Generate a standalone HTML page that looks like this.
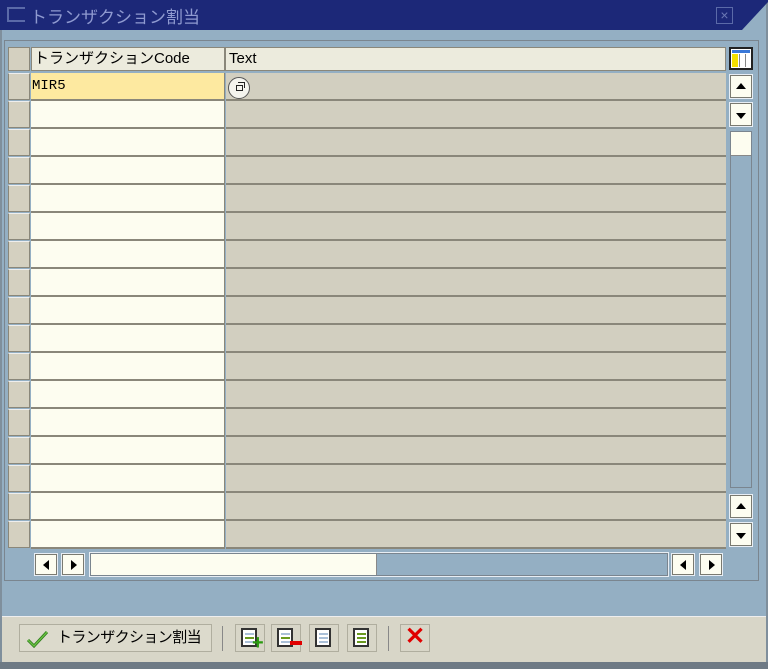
<!DOCTYPE html>
<html><head><meta charset="utf-8"><style>
*{margin:0;padding:0;box-sizing:border-box}
body{width:768px;height:669px;background:#fff;position:relative;overflow:hidden;font-family:"Liberation Sans","Noto Sans CJK JP",sans-serif;font-size:15px}
.a{position:absolute;white-space:nowrap}
.btn{position:absolute;background:#fdfdf0;border:1px solid #7a7a70;box-shadow:0 0 0 1px #e8eef4}
.tri{position:absolute;width:0;height:0}
</style></head><body>
<div class="a" style="left:0;top:0;width:768px;height:669px;background:#94afc3;border:2px solid #7f8f9c"></div>
<div class="a" style="left:0;top:0;width:768px;height:30px;background:#1c2878;clip-path:polygon(0 0,768px 0,768px 2px,742px 30px,0 30px)"></div>
<div class="a" style="left:7px;top:7px;width:18px;height:15px;border:2px solid #5b6aa8;border-right:none"></div>
<div class="a" style="left:30px;top:3px;color:#8f9ad0;font-size:17px">トランザクション割当</div>
<div class="a" style="left:716px;top:7px;width:17px;height:17px;border:1px solid #5b6aa8;color:#6b78b4;font-size:14px;line-height:15px;text-align:center">×</div>
<div class="a" style="left:4px;top:40px;width:755px;height:541px;border:1px solid #7a858f;background:#94afc3"></div>
<div class="a" style="left:8px;top:47px;width:22px;height:24px;background:#d4d0c0;border:1px solid #8a877a"></div>
<div class="a" style="left:31px;top:47px;width:194px;height:24px;background:#ecebdd;border:1px solid #8a877a;padding-left:2px;line-height:22px">トランザクションCode</div>
<div class="a" style="left:225px;top:47px;width:501px;height:24px;background:#ecebdd;border:1px solid #8a877a;padding-left:3px;line-height:22px">Text</div>
<div class="a" style="left:729px;top:47px;width:24px;height:23px;background:#fff;border:2px solid #222">
 <div class="a" style="left:1px;top:1px;width:18px;height:3px;background:#3a78d8"></div>
 <div class="a" style="left:1px;top:5px;width:6px;height:13px;background:#f4e000"></div>
 <div class="a" style="left:8px;top:5px;width:1px;height:13px;background:#888"></div>
 <div class="a" style="left:14px;top:5px;width:1px;height:13px;background:#888"></div>
</div>
<div id="rows"></div>
<div class="btn" style="left:730px;top:75px;width:22px;height:23px"><div class="tri" style="left:5px;top:7px;border:5px solid transparent;border-bottom:6px solid #000;border-top:none"></div></div>
<div class="btn" style="left:730px;top:103px;width:22px;height:23px"><div class="tri" style="left:5px;top:9px;border:5px solid transparent;border-top:6px solid #000;border-bottom:none"></div></div>
<div class="a" style="left:730px;top:131px;width:22px;height:357px;background:#94afc3;border:1px solid #7a858f"></div>
<div class="a" style="left:731px;top:132px;width:20px;height:24px;background:#fdfdf0;border-bottom:1px solid #888"></div>
<div class="btn" style="left:730px;top:495px;width:22px;height:23px"><div class="tri" style="left:5px;top:7px;border:5px solid transparent;border-bottom:6px solid #000;border-top:none"></div></div>
<div class="btn" style="left:730px;top:523px;width:22px;height:23px"><div class="tri" style="left:5px;top:9px;border:5px solid transparent;border-top:6px solid #000;border-bottom:none"></div></div>
<div class="btn" style="left:35px;top:554px;width:22px;height:21px"><div class="tri" style="left:7px;top:5px;border:5px solid transparent;border-right:6px solid #000;border-left:none"></div></div>
<div class="btn" style="left:62px;top:554px;width:22px;height:21px"><div class="tri" style="left:8px;top:5px;border:5px solid transparent;border-left:6px solid #000;border-right:none"></div></div>
<div class="a" style="left:90px;top:553px;width:578px;height:23px;background:#94afc3;border:1px solid #7a858f;box-shadow:0 0 0 1px #e8eef4"></div>
<div class="a" style="left:91px;top:554px;width:286px;height:21px;background:#fdfdf0;border-right:1px solid #888"></div>
<div class="btn" style="left:672px;top:554px;width:22px;height:21px"><div class="tri" style="left:7px;top:5px;border:5px solid transparent;border-right:6px solid #000;border-left:none"></div></div>
<div class="btn" style="left:700px;top:554px;width:22px;height:21px"><div class="tri" style="left:8px;top:5px;border:5px solid transparent;border-left:6px solid #000;border-right:none"></div></div>
<div class="a" style="left:2px;top:616px;width:764px;height:46px;background:#d8d6c8;border-top:1px solid #eee"></div>
<div class="a" style="left:0;top:662px;width:768px;height:7px;background:#6e7a85"></div>
<div class="a" style="left:19px;top:624px;width:193px;height:28px;border:1px solid #b0ae9f;background:#dcdacc;font-size:15px;line-height:26px;padding-left:37px;letter-spacing:-0.6px;overflow:hidden">トランザクション割当</div>
<svg class="a" style="left:26px;top:629px" width="24" height="20"><path d="M2 11 L8 17 L21 3" stroke="#2a7a1a" stroke-width="3" fill="none"/><path d="M2 11 L8 17 L21 3" stroke="#6ac040" stroke-width="1.4" fill="none"/></svg>
<div class="a" style="left:222px;top:626px;width:1px;height:25px;background:#888"></div>
<div class="a" style="left:388px;top:626px;width:1px;height:25px;background:#888"></div>
<div id="tb"></div>
<div class="a" style="left:400px;top:624px;width:30px;height:28px;border:1px solid #b0ae9f"></div>
<div class="a" style="left:400px;top:622px;width:30px;height:30px;color:#e00000;font-size:24px;font-weight:bold;text-align:center;line-height:30px">✕</div>
<script>
var h='';
for(var i=0;i<17;i++){var t=73+i*28;
h+='<div class="a" style="left:8px;top:'+t+'px;width:22px;height:27px;background:#d4d0c0;border:1px solid #8a877a;border-top-color:#eee"></div>';
h+='<div class="a" style="left:31px;top:'+t+'px;width:194px;height:28px;background:'+(i==0?'#fde9a0':'#fdfdf0')+';border-bottom:2px solid #8a877a;border-right:1px solid #8a877a;padding-left:1px;line-height:27px;font-family:Liberation Mono,monospace;font-size:14px">'+(i==0?'MIR5':'')+'</div>';
h+='<div class="a" style="left:226px;top:'+t+'px;width:500px;height:28px;background:#d2cfc0;border-bottom:2px solid #8a877a"></div>';}
h+='<div class="a" style="left:228px;top:77px;width:22px;height:22px;border-radius:50%;background:#f4f4ee;border:1px solid #555"><div class="a" style="left:7px;top:7px;width:7px;height:6px;border:1px solid #222"></div><div class="a" style="left:9px;top:4px;width:7px;height:6px;border:1px solid #222;border-left:none;border-bottom:none"></div></div>';
document.getElementById('rows').innerHTML=h;
var b='',xs=[235,271,309,347];
for(var j=0;j<4;j++){var x=xs[j];
b+='<div class="a" style="left:'+x+'px;top:624px;width:30px;height:28px;border:1px solid #b0ae9f"></div>';
b+='<div class="a" style="left:'+(x+6)+'px;top:628px;width:16px;height:19px;border:2px solid #333;background:#fff"><div class="a" style="left:2px;top:3px;width:9px;height:2px;background:'+(j==3?'#6a9a20':'#aac0d8')+'"></div><div class="a" style="left:2px;top:7px;width:9px;height:2px;background:'+(j==2?'#aac0d8':'#6a9a20')+'"></div><div class="a" style="left:2px;top:11px;width:9px;height:2px;background:'+(j==3?'#6a9a20':'#aac0d8')+'"></div></div>';}
b+='<div class="a" style="left:252px;top:636px;color:#2a9a10;font-weight:bold;font-size:20px;line-height:14px">+</div>';
b+='<div class="a" style="left:290px;top:641px;width:12px;height:4px;background:#e00000"></div>';
document.getElementById('tb').innerHTML=b;
</script>
</body></html>
